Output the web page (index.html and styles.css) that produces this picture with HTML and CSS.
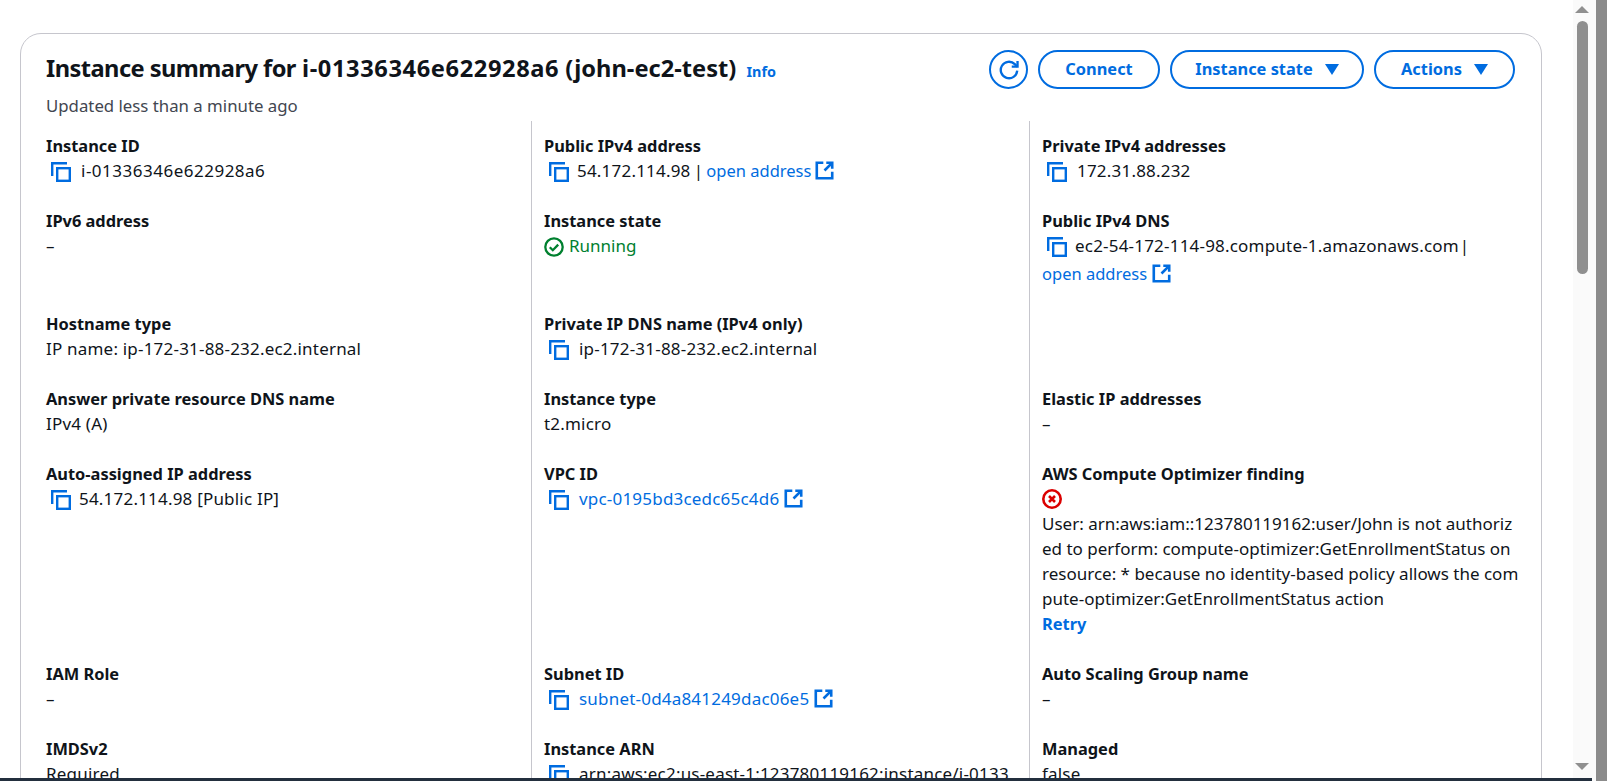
FILE: index.html
```html
<!DOCTYPE html>
<html lang="en">
<head>
<meta charset="utf-8">
<title>Instance summary</title>
<link rel="stylesheet" href="styles.css">
</head>
<body>
<div class="page">
  <main class="main">
    <section class="card">
      <header class="head">
        <div class="head-text">
          <h1 class="title"><span class="title-lead">Instance summary for</span> <span class="title-id">i-01336346e622928a6</span> (john-ec2-test) <a class="info">Info</a></h1>
          <p class="updated">Updated less than a minute ago</p>
        </div>
        <div class="actions">
          <button class="btn btn-icon" aria-label="Refresh"><svg class="ico-refresh" viewBox="0 0 16 16"><path d="M14 8.5A6 6 0 1 1 12.2 3.7L14 5.5"/><path d="M14.2 1.4v4.2H10"/></svg></button>
          <button class="btn btn-connect">Connect</button>
          <button class="btn btn-state">Instance state <span class="caret"></span></button>
          <button class="btn btn-actions">Actions <span class="caret"></span></button>
        </div>
      </header>
      <div class="grid">
        <div class="cell"><div class="label">Instance ID</div><div class="value"><svg class="copy" viewBox="0 0 20 20"><path d="M1.2 14V1.2H16"/><rect x="6.2" y="6.2" width="12.6" height="12.6"/></svg><span class="gap-id id-num">i-01336346e622928a6</span></div></div>
        <div class="cell"><div class="label">Public IPv4 address</div><div class="value tight"><svg class="copy" viewBox="0 0 20 20"><path d="M1.2 14V1.2H16"/><rect x="6.2" y="6.2" width="12.6" height="12.6"/></svg>54.172.114.98 | <a class="link plain">open address</a> <svg class="ext" viewBox="0 0 16 16"><path d="M7 1.5H1.5v13h13V9"/><path d="M8 8l6-6M9.5 1.5h5v5"/></svg></div></div>
        <div class="cell"><div class="label">Private IPv4 addresses</div><div class="value"><svg class="copy" viewBox="0 0 20 20"><path d="M1.2 14V1.2H16"/><rect x="6.2" y="6.2" width="12.6" height="12.6"/></svg><span class="gap-id">172.31.88.232</span></div></div>

        <div class="cell"><div class="label">IPv6 address</div><div class="value">–</div></div>
        <div class="cell"><div class="label">Instance state</div><div class="value running"><svg class="status" viewBox="0 0 20 20"><circle cx="10" cy="10" r="8.7"/><path d="M5.8 10.2l3 3 5.4-5.6"/></svg>Running</div></div>
        <div class="cell"><div class="label">Public IPv4 DNS</div><div class="value"><svg class="copy" viewBox="0 0 20 20"><path d="M1.2 14V1.2H16"/><rect x="6.2" y="6.2" width="12.6" height="12.6"/></svg>ec2-54-172-114-98.compute-1.amazonaws.com<span class="pipe">|</span></div><div class="value tall"><a class="link plain">open address</a> <svg class="ext" viewBox="0 0 16 16"><path d="M7 1.5H1.5v13h13V9"/><path d="M8 8l6-6M9.5 1.5h5v5"/></svg></div></div>

        <div class="cell"><div class="label">Hostname type</div><div class="value">IP name: ip-172-31-88-232.ec2.internal</div></div>
        <div class="cell"><div class="label">Private IP DNS name (IPv4 only)</div><div class="value"><svg class="copy" viewBox="0 0 20 20"><path d="M1.2 14V1.2H16"/><rect x="6.2" y="6.2" width="12.6" height="12.6"/></svg><span class="gap-id">ip-172-31-88-232.ec2.internal</span></div></div>
        <div class="cell"></div>

        <div class="cell"><div class="label">Answer private resource DNS name</div><div class="value">IPv4 (A)</div></div>
        <div class="cell"><div class="label">Instance type</div><div class="value">t2.micro</div></div>
        <div class="cell"><div class="label">Elastic IP addresses</div><div class="value">–</div></div>

        <div class="cell"><div class="label">Auto-assigned IP address</div><div class="value lifted"><svg class="copy" viewBox="0 0 20 20"><path d="M1.2 14V1.2H16"/><rect x="6.2" y="6.2" width="12.6" height="12.6"/></svg>54.172.114.98 [Public IP]</div></div>
        <div class="cell"><div class="label">VPC ID</div><div class="value lifted"><svg class="copy" viewBox="0 0 20 20"><path d="M1.2 14V1.2H16"/><rect x="6.2" y="6.2" width="12.6" height="12.6"/></svg><a class="link gap-id">vpc-0195bd3cedc65c4d6</a> <svg class="ext" viewBox="0 0 16 16"><path d="M7 1.5H1.5v13h13V9"/><path d="M8 8l6-6M9.5 1.5h5v5"/></svg></div></div>
        <div class="cell"><div class="label">AWS Compute Optimizer finding</div><div class="icon-line"><svg class="status err" viewBox="0 0 20 20"><circle cx="10" cy="10" r="8.7"/><path d="M7 7l6 6M13 7l-6 6"/></svg></div><div class="value wrap">User: arn:aws:iam::123780119162:user/John is not authorized to perform: compute-optimizer:GetEnrollmentStatus on resource: * because no identity-based policy allows the compute-optimizer:GetEnrollmentStatus action</div><div class="value retry"><a class="link strong">Retry</a></div></div>

        <div class="cell"><div class="label">IAM Role</div><div class="value">–</div></div>
        <div class="cell"><div class="label">Subnet ID</div><div class="value"><svg class="copy" viewBox="0 0 20 20"><path d="M1.2 14V1.2H16"/><rect x="6.2" y="6.2" width="12.6" height="12.6"/></svg><a class="link gap-id">subnet-0d4a841249dac06e5</a> <svg class="ext" viewBox="0 0 16 16"><path d="M7 1.5H1.5v13h13V9"/><path d="M8 8l6-6M9.5 1.5h5v5"/></svg></div></div>
        <div class="cell"><div class="label">Auto Scaling Group name</div><div class="value">–</div></div>

        <div class="cell"><div class="label">IMDSv2</div><div class="value">Required</div></div>
        <div class="cell"><div class="label">Instance ARN</div><div class="value"><svg class="copy" viewBox="0 0 20 20"><path d="M1.2 14V1.2H16"/><rect x="6.2" y="6.2" width="12.6" height="12.6"/></svg><span class="gap-id">arn:aws:ec2:us-east-1:123780119162:instance/i-0133</span></div></div>
        <div class="cell"><div class="label">Managed</div><div class="value">false</div></div>
      </div>
    </section>
  </main>
  <div class="scrollbar">
    <div class="arrow arrow-up"></div>
    <div class="thumb"></div>
    <div class="arrow arrow-down"></div>
  </div>
  <div class="edge"></div>
  <div class="bottom-bar"></div>
</div>
</body>
</html>
```
FILE: styles.css
```css
* { box-sizing: border-box; }
html, body { margin: 0; height: 100%; overflow: hidden; background: #fff; }
body { font-family: "Noto Sans", "Open Sans", sans-serif; font-size: 16.4px; line-height: 25.2px; color: #0f141a; }
.page { position: relative; display: flex; height: 781px; overflow: hidden; }
.main { flex: 1; min-width: 0; padding: 33px 31px 0 20px; overflow: hidden; }
.card { border: 1px solid #c6c6cd; border-radius: 21px; background: #fff; padding: 18px 25px 0; min-height: 900px; }
.head { display: flex; justify-content: space-between; align-items: flex-start; height: 69px; }
.title { margin: 0; font-size: 23.65px; line-height: 32px; font-weight: 700; white-space: nowrap; }
.title-lead { letter-spacing: -.55px; }
.title-id { letter-spacing: .6px; }
.info { font-size: 14.4px; color: #006ce0; font-weight: 700; margin-left: 4px; }
.updated { margin: 5px 0 0; color: #424650; font-size: 16.8px; line-height: 25px; }
.actions { display: flex; align-items: center; gap: 10px; margin-top: -2px; margin-right: 1px; }
.btn { height: 39px; border: 2px solid #006ce0; border-radius: 20px; background: #fff; color: #006ce0; font: 700 16.4px/1 "Noto Sans", sans-serif; display: flex; align-items: center; justify-content: center; padding: 0; gap: 12px; }
.btn-icon { width: 39px; }
.btn-connect { width: 122px; }
.btn-state { width: 194px; }
.btn-actions { width: 141px; }
.ico-refresh { width: 22px; height: 22px; fill: none; stroke: #006ce0; stroke-width: 1.7; }
.caret { width: 0; height: 0; border-left: 7px solid transparent; border-right: 7px solid transparent; border-top: 11px solid #006ce0; }
.grid { display: grid; grid-template-columns: 510px 498px 1fr; margin-left: -25px; margin-right: -25px; }
.cell { padding: 11.5px 0 13.5px 12px; }
.cell:nth-child(3n+1) { padding-left: 25px; }
.cell:nth-child(3n) { padding-right: 22px; }
.cell:nth-child(3n+2), .cell:nth-child(3n) { border-left: 1px solid #c6c6cd; }
.label { font-weight: 700; }
.value { display: block; font-size: 17px; letter-spacing: .2px; white-space: nowrap; }
.tight { word-spacing: -1.5px; }
.lifted { margin-top: -1px; }
.retry { margin-bottom: -1px; }
.copy { width: 20px; height: 20px; fill: none; stroke: #006ce0; stroke-width: 2.4; vertical-align: -5px; margin: 0 8px 0 5px; }
.gap-id { margin-left: 2px; }
.id-num { letter-spacing: .5px; }
.pipe { margin-left: 1px; }
.ext { width: 19px; height: 19px; fill: none; stroke: #006ce0; stroke-width: 2.2; vertical-align: -3px; margin-left: 0; }
.link { color: #006ce0; word-spacing: 0; }
.plain { letter-spacing: 0; font-size: 16.5px; }
.strong { font-weight: 700; letter-spacing: 0; font-size: 16.4px; }
.tall { margin-top: 2.5px; margin-bottom: -.5px; }
.wrap { word-break: break-all; white-space: normal; letter-spacing: 0; }
.running { color: #00802f; letter-spacing: 0; }
.status { width: 20px; height: 20px; fill: none; stroke: #00802f; stroke-width: 2.3; vertical-align: -5px; margin-right: 5px; }
.icon-line { height: 24px; display: flex; align-items: center; }
.err { stroke: #db0000; stroke-width: 2.6; margin: 0; }
.scrollbar { width: 23px; position: relative; flex: none; background: #fafafa; }
.thumb { position: absolute; left: 4px; top: 21px; width: 11px; height: 253px; border-radius: 6px; background: #8f8f8f; }
.arrow { position: absolute; left: 2px; width: 0; height: 0; border-left: 7px solid transparent; border-right: 7px solid transparent; }
.arrow-up { top: 6px; border-bottom: 7px solid #8f8f8f; }
.arrow-down { top: 763px; border-top: 7px solid #8f8f8f; }
.edge { width: 11px; flex: none; background: #8b8b8b; }
.bottom-bar { position: absolute; left: 0; bottom: 0; width: 1592px; height: 3px; background: #232f3e; }
```
